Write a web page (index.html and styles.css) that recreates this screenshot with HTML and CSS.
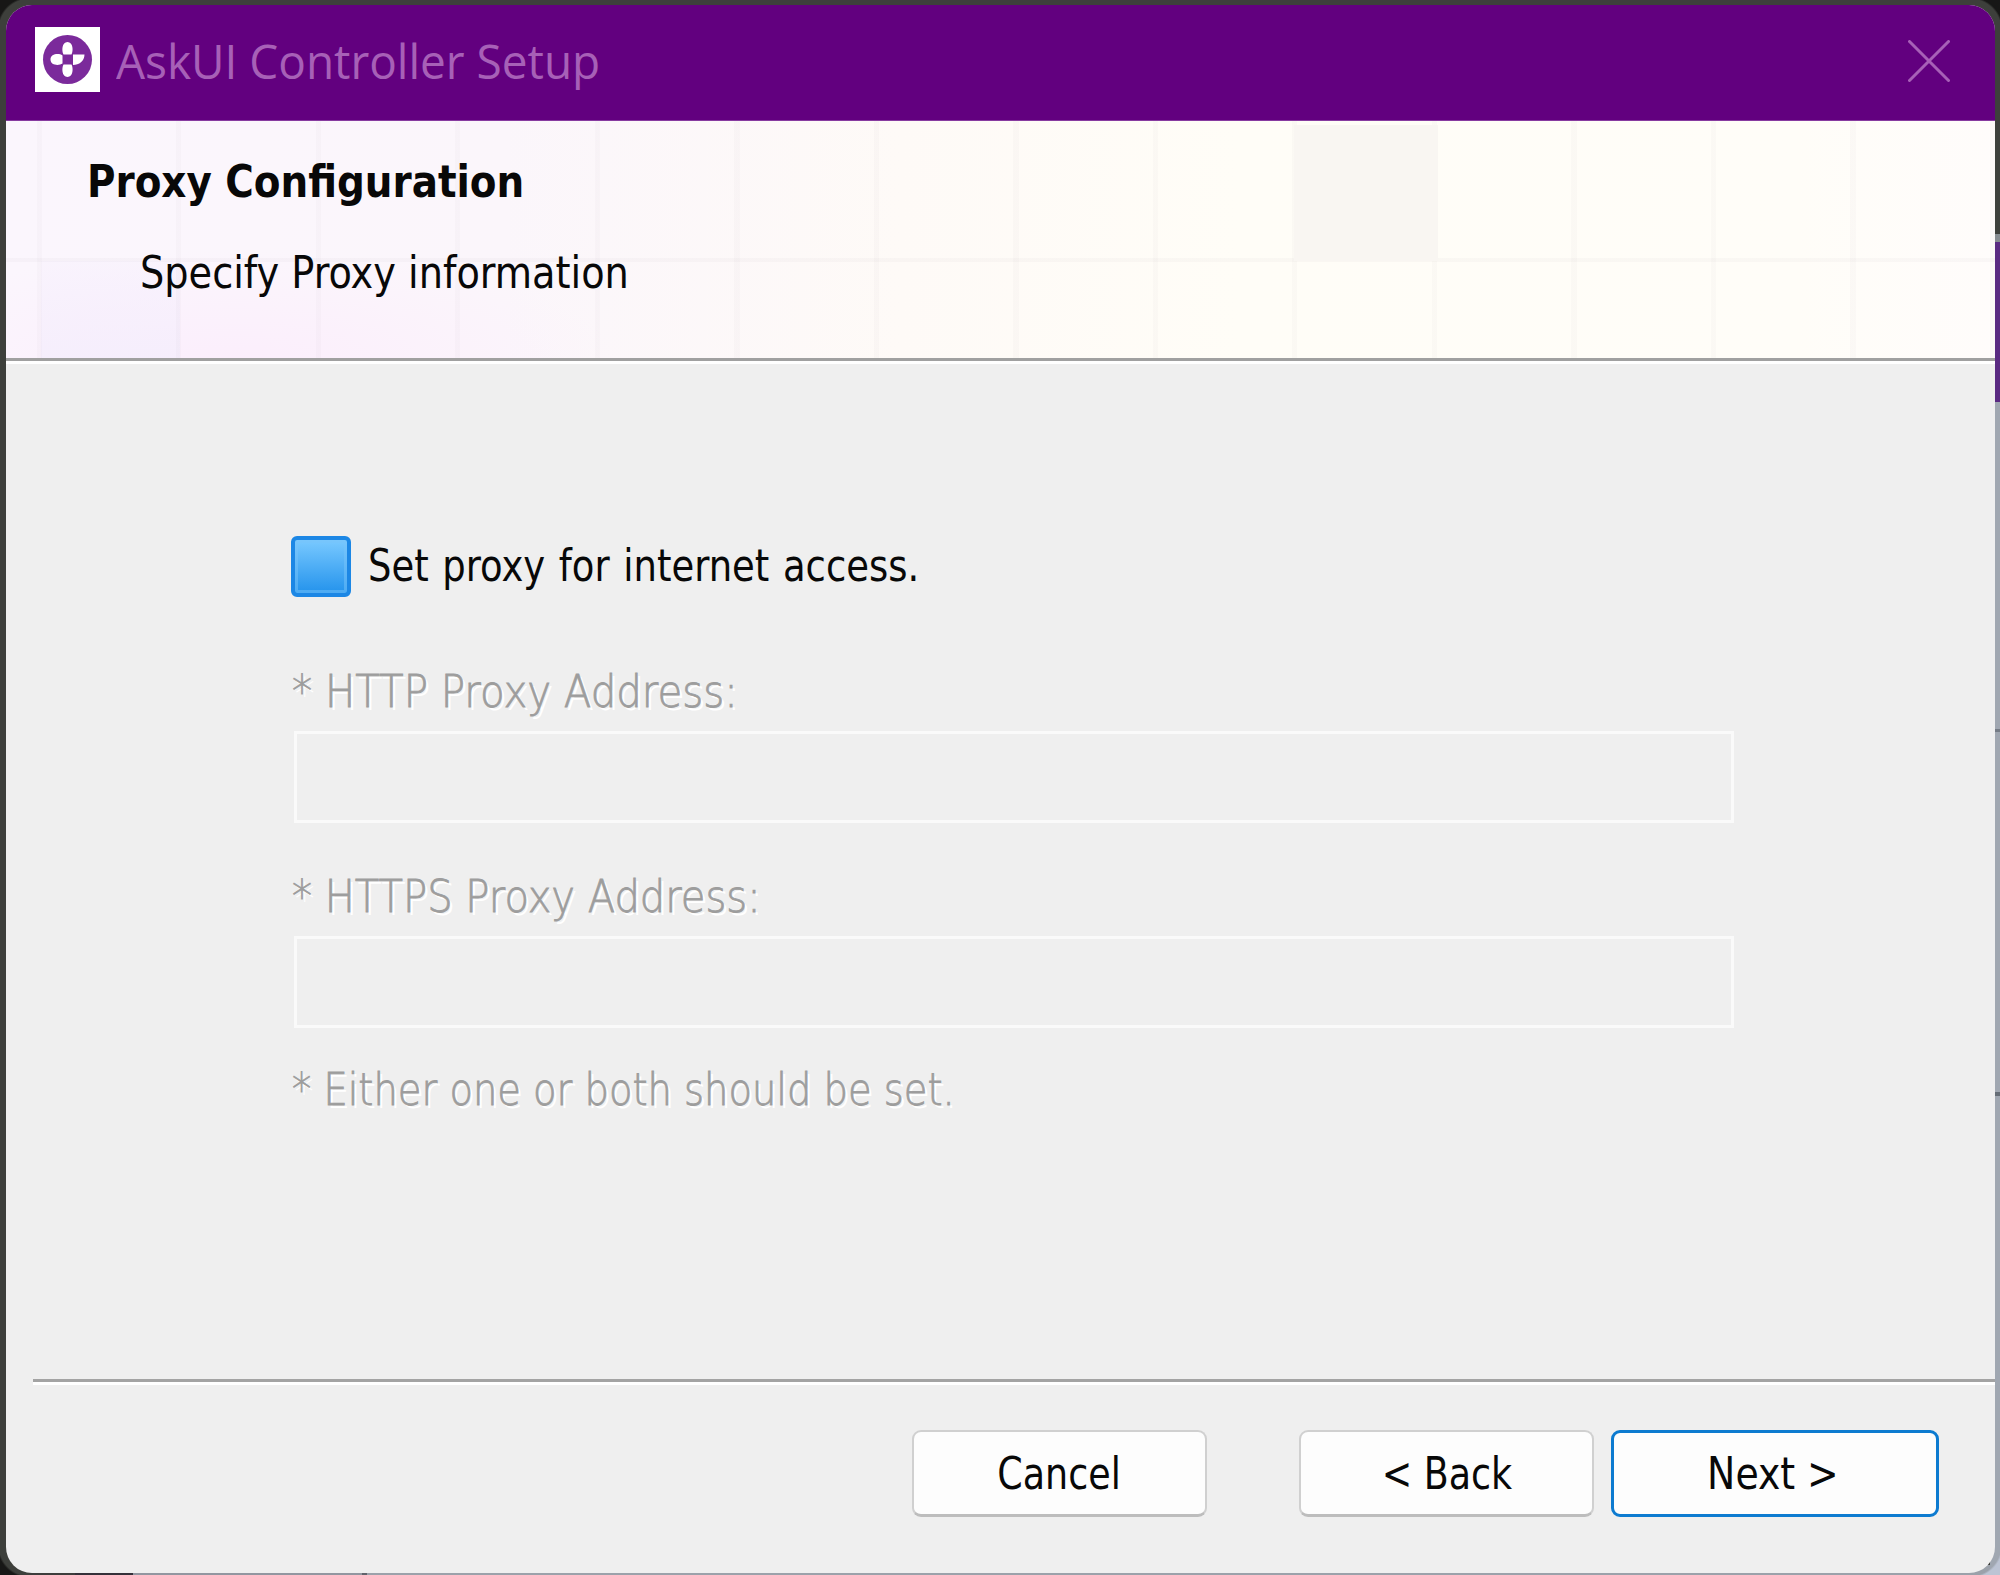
FILE: index.html
```html
<!DOCTYPE html>
<html lang="en">
<head>
<meta charset="utf-8">
<title>AskUI Controller Setup</title>
<link rel="stylesheet" href="styles.css">
</head>
<body>
<div class="desktop">
  <main class="window">
    <header class="titlebar">
      <svg class="logo" viewBox="0 0 65 65" aria-hidden="true">
        <rect width="65" height="65" fill="#fff"/>
        <circle cx="32.5" cy="32.5" r="24.500" fill="#7b2a9b"/>
        <path fill="#fff" d="M28.500 27.500C26.500 24 26.800 15 32.500 15S38.500 24 36.500 27.500ZM28.500 37.500H36.500C38.500 41 38.200 50 32.500 50S26.500 41 28.500 37.500ZM27.500 28.500V36.500C24 39 15.500 38.500 15.500 32.500S24 26 27.500 28.500ZM38 27.500H49.500C49.500 34 44 38 38 38Z"/>
      </svg>
      <h1 class="title"><span class="t">AskUI Controller Setup</span></h1>
      <svg class="close" viewBox="0 0 42 42" aria-hidden="true"><path d="M1.500 1.500 40.500 40.500M40.500 1.500 1.500 40.500"/></svg>
    </header>
    <section class="banner">
      <h2 class="heading"><span class="t">Proxy Configuration</span></h2>
      <p class="subheading"><span class="t">Specify Proxy information</span></p>
    </section>
    <section class="content">
      <label class="option"><span class="checkbox"></span><span class="t option-text">Set proxy for internet access.</span></label>
      <div class="field"><label class="disabled"><span class="t http">* HTTP Proxy Address:</span></label><div class="input"></div></div>
      <div class="field"><label class="disabled"><span class="t https">* HTTPS Proxy Address:</span></label><div class="input"></div></div>
      <p class="disabled note"><span class="t either">* Either one or both should be set.</span></p>
    </section>
    <footer class="footer">
      <button class="button cancel"><span class="t">Cancel</span></button>
      <button class="button back"><span class="t">&lt; Back</span></button>
      <button class="button next"><span class="t">Next &gt;</span></button>
    </footer>
  </main>
</div>
</body>
</html>
```
FILE: styles.css
```css
* { box-sizing: border-box; margin: 0; padding: 0; }
body { font-family: "DejaVu Sans Condensed", "DejaVu Sans", sans-serif; font-size: 44px; color: #080808; }
.desktop {
  width: 2000px; height: 1575px; padding: 5px 5px 2px 6px; overflow: hidden;
  background:
    radial-gradient(circle at 100% 100%, transparent 31px, #171716 33px) 0 0 / 30px 30px no-repeat,
    radial-gradient(circle at 0 100%, transparent 31px, #171716 33px) 100% 0 / 30px 30px no-repeat,
    radial-gradient(circle at 100% 0, transparent 31px, #171716 33px) 0 100% / 30px 30px no-repeat,
    radial-gradient(circle at 0 0, transparent 31px, #bcc4d4 33px) 100% 100% / 30px 30px no-repeat,
    linear-gradient(#3d3f3b 0 234px, #858b90 234px 242px, #5a2a82 242px 402px, #a0a7b1 402px 729px, #757c86 729px 732px, #a0a7b1 732px 1092px, #666d76 1092px 1096px, #a0a7b1 1096px) right / 10px 100% no-repeat,
    linear-gradient(90deg, #3d3d3c 0 45px, #343039 45px 103px, #9296a0 103px 332px, #60636b 332px 337px, #9ba1aa 337px) right bottom / 1970px 10px no-repeat,
    #3d3f3b;
}
.window { width: 1989px; height: 1568px; display: flex; flex-direction: column; background: #efefef; border-radius: 26px; overflow: hidden; }
.t { display: inline-block; white-space: pre; transform-origin: 0 50%; }
.titlebar { height: 116px; flex: none; display: flex; align-items: flex-start; padding: 22px 45px 0 29px; background: #62007f; border-bottom: 1px solid #873ba0; }
.logo { width: 65px; height: 65px; flex: none; }
.title { flex: 1; padding: 1px 0 0 16px; font: 400 48px/65px "Open Sans", sans-serif; color: #a760b7; }
.title .t { transform: scaleX(.957); }
.close { width: 42px; height: 42px; margin-top: 13px; fill: none; stroke: #a760b7; stroke-width: 3; stroke-linecap: round; }
.banner {
  height: 240px; flex: none; padding: 31px 0 0 81px; border-bottom: 3px solid #a0a0a0;
  background:
    linear-gradient(#f9f6f2, #f9f6f2) 1288px 4px / 144px 136px no-repeat,
    linear-gradient(rgba(90,70,90,.03), rgba(90,70,90,.03)) 0 137px / 100% 4px no-repeat,
    repeating-linear-gradient(90deg, rgba(90,70,90,.025) 0 5px, transparent 5px 139.500px) 31px 0 / 100% 100% no-repeat,
    linear-gradient(rgba(245,238,252,.3), rgba(245,238,252,.9)) 35px 140px / 139px 100px no-repeat,
    radial-gradient(ellipse 380px 110px at 230px 240px, #fbeefc, transparent),
    linear-gradient(90deg, #fbf6fd, #fbf6fb 25%, #fefaf7 45%, #fffdf7 62%, #fffdf8 90%, #fffcfb);
}
.heading { font-size: 44px; line-height: 60px; font-weight: 700; }
.heading .t { transform: scaleX(.982); }
.subheading { padding-left: 53px; margin-top: 31px; line-height: 60px; }
.subheading .t { transform: scaleX(.967); }
.content { flex: 1; border-top: 3px solid #fff; padding: 171px 261px 0 285px; }
.option { display: flex; align-items: center; height: 62px; }
.checkbox { width: 60px; height: 61px; border: 4px solid #1c87e5; border-radius: 6px; background: linear-gradient(#79c9ff, #2493ec); box-shadow: inset 0 0 0 3px rgba(120,195,250,.5); }
.option-text { margin: -2px 0 0 17px; word-spacing: 2px; transform: scaleX(.934); }
.field { padding-left: 3px; margin-top: 65px; }
.field + .field { margin-top: 44px; }
.disabled { display: block; font-family: "DejaVu Sans", sans-serif; font-weight: 200; line-height: 60px; color: #9d9d9d; -webkit-text-stroke: .8px #9d9d9d; text-shadow: 3px 3px 0 #fff; }
.disabled .t { margin-left: -2px; }
.http { transform: scaleX(.915); }
.https { transform: scaleX(.91); }
.either { transform: scaleX(.873); }
.input { height: 92px; border: 3px solid #fafafa; margin-top: 9px; }
.note { margin-top: 32px; padding-left: 3px; }
.footer { height: 194px; flex: none; margin-left: 27px; border-top: 3px solid #a3a3a3; box-shadow: inset 0 3px 0 #fff; display: flex; justify-content: flex-end; padding: 48px 56px 0 0; }
.button { height: 87px; border: 2px solid #d0d0d0; border-bottom: 3px solid #bdbdbd; border-radius: 9px; background: #fdfdfd; font: inherit; color: #080808; }
.button .t { transform: scaleX(.92); transform-origin: 50% 50%; }
.cancel { width: 295px; margin-right: 92px; }
.back { width: 295px; margin-right: 17px; }
.next { width: 328px; padding-right: 4px; border: 3px solid #0d7bd0; }
.next .t { transform: scaleX(.955); }
```
